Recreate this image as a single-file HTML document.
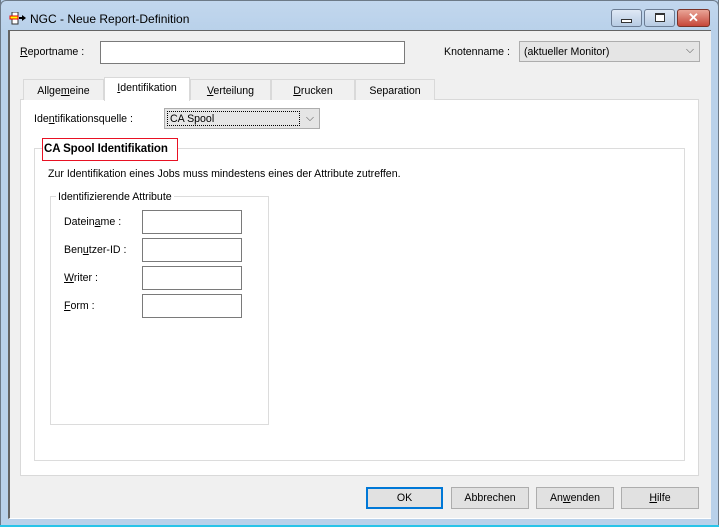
<!DOCTYPE html>
<html><head><meta charset="utf-8"><style>
*{margin:0;padding:0;box-sizing:border-box}
body{width:719px;height:527px;overflow:hidden;background:#b9d1ea;font-family:"Liberation Sans",sans-serif;font-size:10.6px;color:#000;position:relative}
.a{position:absolute}
.btn{position:absolute;background:#e1e1e1;border:1px solid #adadad;text-align:center;line-height:21px;height:22px}
.inp{position:absolute;background:#fff;border:1px solid #7a7a7a}
u{text-decoration:underline}
.t{position:absolute;height:21px;background:#f0f0f0;border:1px solid #d9d9d9;border-bottom:none;text-align:center;line-height:22px;top:79px}
</style></head><body>
<div class="a" style="left:0;top:0;width:719px;height:30px;background:linear-gradient(#c2d7ee,#b9d1ea);border:1px solid #6d7a88;border-bottom:none;border-radius:6px 6px 0 0"></div>
<div class="a" style="left:0;top:0;width:1px;height:527px;background:#6d7a88"></div>
<div class="a" style="left:718px;top:0;width:1px;height:527px;background:#6d7a88"></div>
<div class="a" style="left:0;top:525px;width:719px;height:2px;background:#29c4e8"></div>
<svg class="a" style="left:9px;top:12px" width="18" height="14"><rect x="3" y="0" width="6" height="12" fill="#fff" stroke="#333"/><rect x="1" y="4" width="8" height="3" fill="#ff0" stroke="#e00"/><path d="M10 6h4" stroke="#000" stroke-width="2"/><path d="M13 3l4 3-4 3z" fill="#000"/></svg>
<div class="a" style="left:30px;top:12px;font-size:12px">NGC - Neue Report-Definition</div>
<div class="a" style="left:611px;top:9px;width:31px;height:18px;border:1px solid #6b7c93;border-radius:3px;background:linear-gradient(#dfe9f5,#b7cbe3)"><div class="a" style="left:9px;top:9px;width:11px;height:4px;border:1px solid #333;background:#fff"></div></div>
<div class="a" style="left:644px;top:9px;width:31px;height:18px;border:1px solid #6b7c93;border-radius:3px;background:linear-gradient(#dfe9f5,#b7cbe3)"><div class="a" style="left:10px;top:3px;width:10px;height:9px;border:1px solid #333;border-top-width:2px;background:#fff"></div></div>
<div class="a" style="left:677px;top:9px;width:33px;height:18px;border:1px solid #7a3328;border-radius:3px;background:linear-gradient(#e9a597,#c6473a);color:#fff;font-weight:bold;text-align:center;line-height:15px;font-size:13px">✕</div>
<div class="a" style="left:8px;top:30px;width:703px;height:489px;background:#f0f0f0;border-left:2px solid #646464;border-top:1px solid #646464;border-bottom:1px solid #fff"></div>
<div class="a" style="left:20px;top:46px"><u>R</u>eportname :</div>
<div class="inp" style="left:100px;top:41px;width:305px;height:23px"></div>
<div class="a" style="left:444px;top:46px">Knotenname :</div>
<div class="a" style="left:519px;top:41px;width:181px;height:21px;background:#e5e5e5;border:1px solid #adadad;padding:4px 4px">(aktueller Monitor)<span style="position:absolute;right:5px;top:2px;color:#555">⌵</span></div>
<div class="a" style="left:20px;top:99px;width:679px;height:377px;background:#fff;border:1px solid #d9d9d9"></div>
<div class="t" style="left:23px;width:81px">Allge<u>m</u>eine</div>
<div class="a" style="left:104px;top:77px;width:86px;height:24px;background:#fff;border:1px solid #d9d9d9;border-bottom:none;text-align:center;line-height:21px"><u>I</u>dentifikation</div>
<div class="t" style="left:190px;width:81px"><u>V</u>erteilung</div>
<div class="t" style="left:271px;width:84px"><u>D</u>rucken</div>
<div class="t" style="left:355px;width:80px">Separation</div>
<div class="a" style="left:34px;top:113px">Ide<u>n</u>tifikationsquelle :</div>
<div class="a" style="left:164px;top:108px;width:156px;height:21px;background:#e5e5e5;border:1px solid #adadad"><div class="a" style="left:2px;top:2px;width:133px;height:15px;border:1px dotted #000;padding:0 2px;line-height:14px">CA Spool</div><span style="position:absolute;right:5px;top:3px;color:#555">⌵</span></div>
<div class="a" style="left:34px;top:148px;width:651px;height:313px;border:1px solid #dcdcdc"></div>
<div class="a" style="left:42px;top:138px;width:136px;height:23px;background:#fff;border:1px solid #e81123;font-weight:bold;font-size:11.5px;padding:4px 0 0 1px;letter-spacing:-0.1px">CA Spool Identifikation</div>
<div class="a" style="left:48px;top:168px">Zur Identifikation eines Jobs muss mindestens eines der Attribute zutreffen.</div>
<div class="a" style="left:50px;top:196px;width:219px;height:229px;border:1px solid #dcdcdc"></div>
<div class="a" style="left:56px;top:191px;background:#fff;padding:0 2px">Identifizierende Attribute</div>
<div class="a" style="left:64px;top:216px">Datein<u>a</u>me :</div>
<div class="a" style="left:64px;top:244px">Ben<u>u</u>tzer-ID :</div>
<div class="a" style="left:64px;top:272px"><u>W</u>riter :</div>
<div class="a" style="left:64px;top:300px"><u>F</u>orm :</div>
<div class="inp" style="left:142px;top:210px;width:100px;height:24px"></div>
<div class="inp" style="left:142px;top:238px;width:100px;height:24px"></div>
<div class="inp" style="left:142px;top:266px;width:100px;height:24px"></div>
<div class="inp" style="left:142px;top:294px;width:100px;height:24px"></div>
<div class="btn" style="left:366px;top:487px;width:77px;border:2px solid #0078d7;line-height:19px">OK</div>
<div class="btn" style="left:451px;top:487px;width:78px">Abbrechen</div>
<div class="btn" style="left:536px;top:487px;width:78px">An<u>w</u>enden</div>
<div class="btn" style="left:621px;top:487px;width:78px"><u>H</u>ilfe</div>
</body></html>
